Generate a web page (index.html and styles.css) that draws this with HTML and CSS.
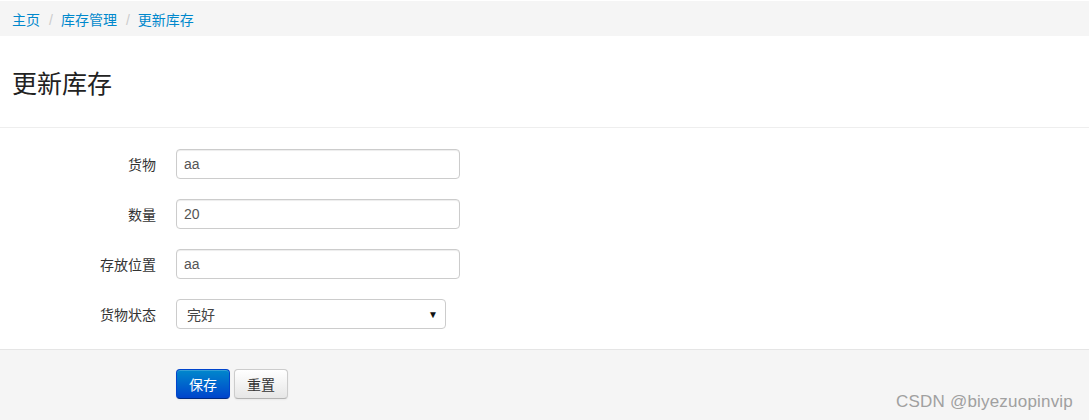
FILE: index.html
```html
<!DOCTYPE html>
<html>
  <head>
    <meta charset="UTF-8">
    <title>更新库存</title>
    <link rel="stylesheet" href="styles.css">
  </head>
  <body>
    <ul class="breadcrumb">
      <li><a href="#">主页</a><span class="divider">/</span></li>
      <li><a href="#">库存管理</a><span class="divider">/</span></li>
      <li><a href="#">更新库存</a></li>
    </ul>

    <div class="page-header">
      <h1>更新库存</h1>
    </div>

    <form class="form-horizontal">
      <div class="control-group">
        <label class="control-label">货物</label>
        <div class="controls"><input type="text" value="aa"></div>
      </div>
      <div class="control-group">
        <label class="control-label">数量</label>
        <div class="controls"><input type="text" value="20"></div>
      </div>
      <div class="control-group">
        <label class="control-label">存放位置</label>
        <div class="controls"><input type="text" value="aa"></div>
      </div>
      <div class="control-group">
        <label class="control-label">货物状态</label>
        <div class="controls">
          <div class="select">
            <span>完好</span>
            <span class="caret">▼</span>
          </div>
        </div>
      </div>

      <div class="form-actions">
        <button type="button" class="btn btn-primary">保存</button>
        <button type="reset" class="btn">重置</button>
        <span class="watermark">CSDN @biyezuopinvip</span>
      </div>
    </form>
  </body>
</html>
```

FILE: styles.css
```css
body {
  margin: 0;
  font-family: "Liberation Sans", Arial, "Noto Sans CJK SC", sans-serif;
  font-size: 14px;
  color: #333;
  background: #fff;
}
.breadcrumb {
  list-style: none;
  margin: 1px 0 0;
  padding: 0 12px;
  height: 35px;
  background-color: #f5f5f5;
  display: flex;
  align-items: center;
}
.breadcrumb a {
  color: #0088cc;
  text-decoration: none;
}
.breadcrumb .divider {
  color: #ccc;
  padding: 0 8px 0 9px;
}
.page-header {
  height: 91px;
  border-bottom: 1px solid #eee;
  display: flex;
  align-items: center;
  padding: 0 12px;
}
.page-header h1 {
  margin: 1px 0 0;
  font-size: 25px;
  font-weight: normal;
  color: #222;
  font-family: "Noto Sans CJK SC", serif;
}
.form-horizontal {
  margin: 0;
  padding-top: 21px;
}
.control-group {
  display: flex;
  align-items: center;
  height: 30px;
  margin-bottom: 20px;
}
.control-label {
  width: 156px;
  text-align: right;
  margin-right: 20px;
}
.controls input {
  box-sizing: border-box;
  width: 284px;
  height: 30px;
  padding: 4px 7px;
  border: 1px solid #ccc;
  border-radius: 4px;
  box-shadow: inset 0 1px 1px rgba(0, 0, 0, 0.075);
  font: 14px "Liberation Sans", Arial, "Noto Sans CJK SC", sans-serif;
  color: #555;
}
.select {
  box-sizing: border-box;
  width: 270px;
  height: 30px;
  padding: 0 7px 0 10px;
  border: 1px solid #ccc;
  border-radius: 4px;
  display: flex;
  align-items: center;
  justify-content: space-between;
  color: #444;
  background: #fff;
}
.select .caret {
  font-size: 10px;
  color: #111;
}
.form-actions {
  position: relative;
  margin-top: 0;
  padding: 19px 0 0 176px;
  height: 51px;
  background-color: #f5f5f5;
  border-top: 1px solid #e5e5e5;
  display: flex;
  align-items: flex-start;
  gap: 4px;
}
.btn {
  height: 30px;
  padding: 0 12px;
  font: 14px "Liberation Sans", Arial, "Noto Sans CJK SC", sans-serif;
  color: #333;
  border: 1px solid #ccc;
  border-bottom-color: #b3b3b3;
  border-radius: 4px;
  background-image: linear-gradient(to bottom, #ffffff, #e6e6e6);
  box-shadow: inset 0 1px 0 rgba(255, 255, 255, 0.2), 0 1px 2px rgba(0, 0, 0, 0.05);
  cursor: pointer;
}
.btn-primary {
  color: #fff;
  border-color: #0044cc #0044cc #002a80;
  background-image: linear-gradient(to bottom, #0088cc, #0044cc);
}
.watermark {
  position: absolute;
  right: 16px;
  bottom: 8px;
  font-size: 17px;
  letter-spacing: 0.2px;
  color: #a0a0a0;
}
```
